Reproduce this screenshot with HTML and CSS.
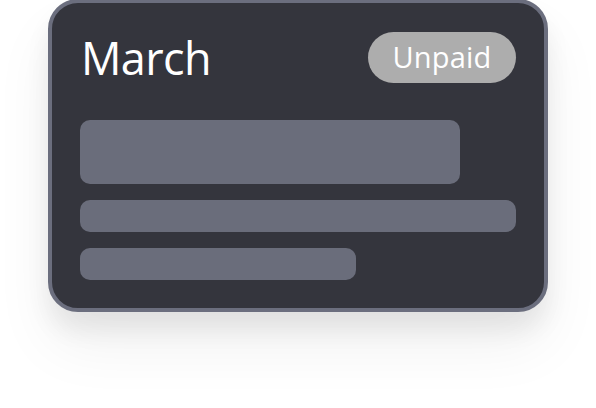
FILE: index.html
```html
<!DOCTYPE html>
<html>
<head>
<meta charset="utf-8">
<link rel="stylesheet" href="styles.css">
</head>
<body>
<div class="stage">
  <div class="card">
    <div class="card-head">
      <div class="title">March</div>
      <div class="badge">Unpaid</div>
    </div>
    <div class="bars">
      <div class="bar bar-lg"></div>
      <div class="bar bar-md"></div>
      <div class="bar bar-sm"></div>
    </div>
  </div>
</div>
</body>
</html>
```
FILE: styles.css
```css
html, body {
  margin: 0;
  padding: 0;
  background: #ffffff;
}
body {
  width: 596px;
  height: 408px;
  overflow: hidden;
  font-family: "Open Sans", "Liberation Sans", sans-serif;
}
.stage {
  display: flex;
  justify-content: center;
  margin-top: -1px;
}
.card {
  box-sizing: border-box;
  width: 500px;
  height: 313px;
  background: #34353d;
  border: 4px solid #6b6e7e;
  border-radius: 30px;
  padding: 28px;
  box-shadow: 0 18px 24px rgba(0, 0, 0, 0.07), 0 34px 60px rgba(0, 0, 0, 0.06);
  display: flex;
  flex-direction: column;
}
.card-head {
  display: flex;
  justify-content: space-between;
  align-items: center;
  height: 52px;
}
.title {
  color: #ffffff;
  font-size: 45px;
  line-height: 52px;
  padding-left: 1px;
  padding-top: 2px;
  letter-spacing: -0.6px;
}
.badge {
  box-sizing: border-box;
  height: 51px;
  width: 148px;
  border-radius: 26px;
  background: #adadad;
  color: #ffffff;
  font-size: 29px;
  line-height: 50px;
  text-align: center;
  letter-spacing: 0.2px;
}
.bars {
  margin-top: 37px;
  display: flex;
  flex-direction: column;
  gap: 16px;
}
.bar {
  background: #6a6d7b;
  border-radius: 10px;
}
.bar-lg { width: 380px; height: 64px; }
.bar-md { width: 436px; height: 32px; }
.bar-sm { width: 276px; height: 32px; }
```
